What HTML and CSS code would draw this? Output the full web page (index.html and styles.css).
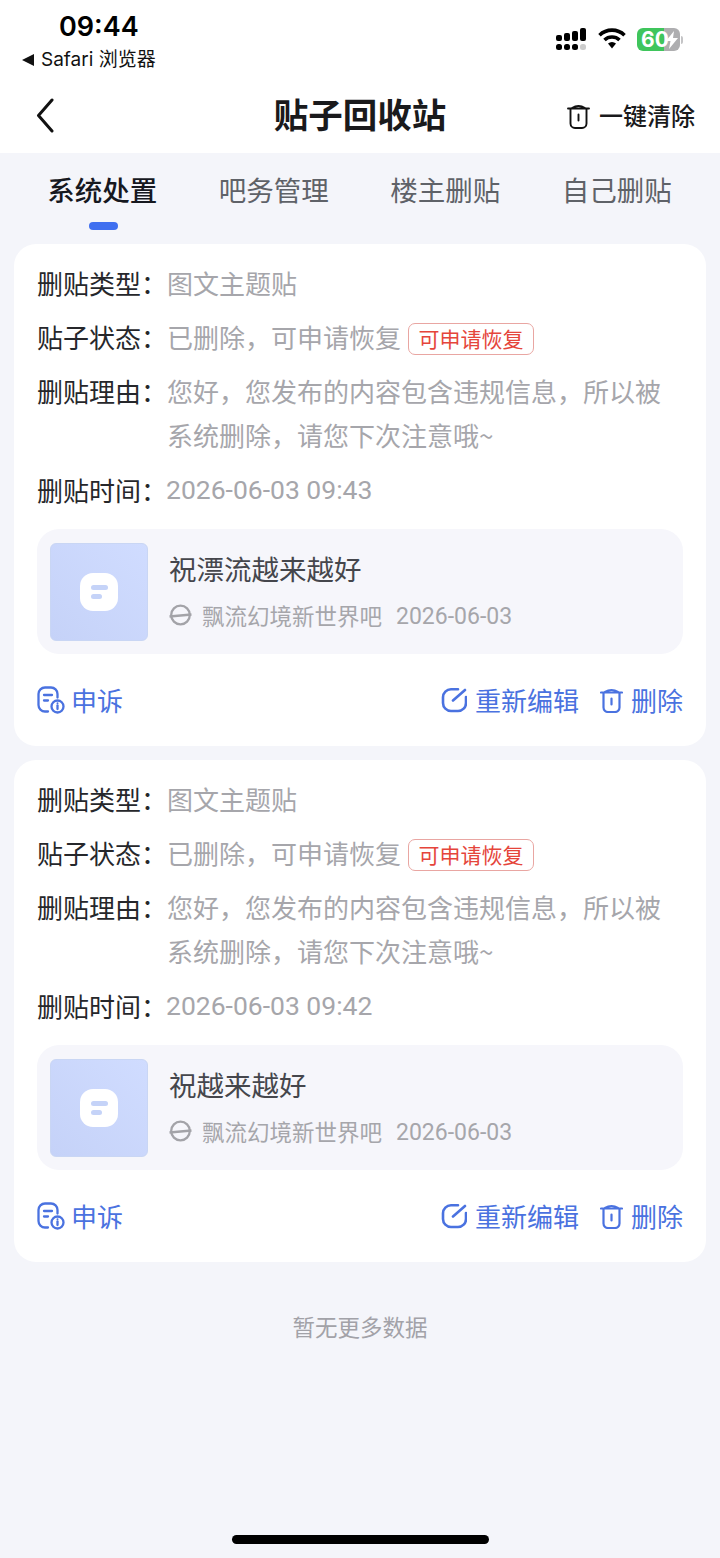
FILE: index.html
```html
<!DOCTYPE html>
<html lang="zh">
<head>
<meta charset="utf-8">
<title>贴子回收站</title>
<link rel="stylesheet" href="styles.css">
</head>
<body>
<div class="page">
  <header class="top">
    <div class="status">
      <div class="status-left">
        <div class="time">09:44</div>
        <div class="back-app"><span class="tri"></span>Safari 浏览器</div>
      </div>
      <div class="status-right">
        <svg class="signal" width="31" height="22" viewBox="0 0 31 22"><g fill="#000"><rect x="0" y="7" width="6" height="6" rx="2"/><rect x="8" y="5" width="6" height="8" rx="2"/><rect x="16" y="3" width="6" height="10" rx="2"/><rect x="24" y="0" width="6" height="13" rx="2"/><rect x="0" y="16" width="6" height="6" rx="2.5"/><rect x="8" y="16" width="6" height="6" rx="2.5"/><rect x="16" y="16" width="6" height="6" rx="2.5"/><rect x="24" y="16" width="6" height="6" rx="2.5" fill="#ccc"/></g></svg>
        <svg class="wifi" width="28" height="21" viewBox="0 0 28 21"><g fill="none" stroke="#000" stroke-width="3.6"><path d="M1.5 7.2a18 18 0 0 1 25 0"/><path d="M6.5 12a11 11 0 0 1 15 0"/></g><path d="M10 15.5a6 6 0 0 1 8 0L14 20.5z" fill="#000"/></svg>
        <div class="battery"><span class="batt-num">60</span><svg class="bolt" width="12" height="18" viewBox="0 0 12 18"><path d="M8 0 0 10h4.500L3 18l9-11H7z" fill="#fff"/></svg></div>
        <span class="batt-cap"></span>
      </div>
    </div>
    <nav class="nav">
      <svg class="back" width="18" height="35" viewBox="0 0 18 35"><path d="M16 2 2.500 17.500 16 33" fill="none" stroke="#111" stroke-width="3" stroke-linecap="round" stroke-linejoin="round"/></svg>
      <h1 class="title">贴子回收站</h1>
      <div class="clear">
        <svg class="trash" width="23" height="25" viewBox="0 0 23 25"><path d="M1 4.500h21M3.500 5v14.500a4.500 4.500 0 0 0 4.500 4.500h7a4.500 4.500 0 0 0 4.500-4.500V5M5 4Q11.500 0 18 4M11.500 10.500v6" fill="none" stroke="#111" stroke-width="1.900" stroke-linecap="round"/></svg>
        <span>一键清除</span>
      </div>
    </nav>
  </header>

  <div class="tabs">
    <div class="tab active">系统处置<span class="ink"></span></div>
    <div class="tab">吧务管理</div>
    <div class="tab">楼主删贴</div>
    <div class="tab">自己删贴</div>
  </div>

  <main class="list">
    <article class="card">
      <div class="row"><span class="key">删贴类型：</span><span class="val">图文主题贴</span></div>
      <div class="row"><span class="key">贴子状态：</span><span class="val">已删除，可申请恢复</span><span class="tag">可申请恢复</span></div>
      <div class="row"><span class="key">删贴理由：</span><span class="val">您好，您发布的内容包含违规信息，所以被系统删除，请您下次注意哦~</span></div>
      <div class="row row-time"><span class="key">删贴时间：</span><span class="val num">2026-06-03 09:43</span></div>
      <div class="post">
        <div class="thumb"><span class="logo"><i class="l1"></i><i class="l2"></i></span></div>
        <div class="post-body">
          <div class="post-title">祝漂流越来越好</div>
          <div class="post-meta">
            <svg class="planet" width="23" height="22" viewBox="0 0 23 22"><g fill="none" stroke="#a3a3a8" stroke-width="2.300"><circle cx="11.500" cy="11" r="9.300"/><path d="M0.500 12.500 22.500 10.500"/></g></svg>
            <span class="forum">飘流幻境新世界吧</span><span class="date">2026-06-03</span>
          </div>
        </div>
      </div>
      <div class="actions">
        <div class="act appeal">
          <svg width="28" height="28" viewBox="0 0 28 28"><g fill="none" stroke="#4a72e0" stroke-width="2.300" stroke-linecap="round"><path d="M11 25.500H8a6.500 6.500 0 0 1-6.500-6.500V8A6.500 6.500 0 0 1 8 1.500h6A6.500 6.500 0 0 1 20.500 8v3.500"/><path d="M7 9h8M7 14.500h4"/><circle cx="20.500" cy="20.500" r="6"/><path d="M20.500 19.500V23"/></g><circle cx="20.500" cy="17.200" r="1" fill="#4a72e0"/></svg>
          <span>申诉</span>
        </div>
        <div class="act-group">
          <div class="act">
            <svg width="28" height="28" viewBox="0 0 28 28"><path d="M19 3.300H12a8 8 0 0 0-8 8V17a8 8 0 0 0 8 8h7a8 8 0 0 0 8-8v-6M14 14.500 26 4" fill="none" stroke="#4a72e0" stroke-width="2.600" stroke-linecap="round"/></svg>
            <span>重新编辑</span>
          </div>
          <div class="act">
            <svg width="23" height="26" viewBox="0 0 23 26"><path d="M1 5.500h21M3.500 6v14.500a4.500 4.500 0 0 0 4.500 4.500h7a4.500 4.500 0 0 0 4.500-4.500V6M5 5Q11.500 1 18 5M11.500 11.500v6" fill="none" stroke="#4a72e0" stroke-width="2.200" stroke-linecap="round"/></svg>
            <span>删除</span>
          </div>
        </div>
      </div>
    </article>

    <article class="card">
      <div class="row"><span class="key">删贴类型：</span><span class="val">图文主题贴</span></div>
      <div class="row"><span class="key">贴子状态：</span><span class="val">已删除，可申请恢复</span><span class="tag">可申请恢复</span></div>
      <div class="row"><span class="key">删贴理由：</span><span class="val">您好，您发布的内容包含违规信息，所以被系统删除，请您下次注意哦~</span></div>
      <div class="row row-time"><span class="key">删贴时间：</span><span class="val num">2026-06-03 09:42</span></div>
      <div class="post">
        <div class="thumb"><span class="logo"><i class="l1"></i><i class="l2"></i></span></div>
        <div class="post-body">
          <div class="post-title">祝越来越好</div>
          <div class="post-meta">
            <svg class="planet" width="23" height="22" viewBox="0 0 23 22"><g fill="none" stroke="#a3a3a8" stroke-width="2.300"><circle cx="11.500" cy="11" r="9.300"/><path d="M0.500 12.500 22.500 10.500"/></g></svg>
            <span class="forum">飘流幻境新世界吧</span><span class="date">2026-06-03</span>
          </div>
        </div>
      </div>
      <div class="actions">
        <div class="act appeal">
          <svg width="28" height="28" viewBox="0 0 28 28"><g fill="none" stroke="#4a72e0" stroke-width="2.300" stroke-linecap="round"><path d="M11 25.500H8a6.500 6.500 0 0 1-6.500-6.500V8A6.500 6.500 0 0 1 8 1.500h6A6.500 6.500 0 0 1 20.500 8v3.500"/><path d="M7 9h8M7 14.500h4"/><circle cx="20.500" cy="20.500" r="6"/><path d="M20.500 19.500V23"/></g><circle cx="20.500" cy="17.200" r="1" fill="#4a72e0"/></svg>
          <span>申诉</span>
        </div>
        <div class="act-group">
          <div class="act">
            <svg width="28" height="28" viewBox="0 0 28 28"><path d="M19 3.300H12a8 8 0 0 0-8 8V17a8 8 0 0 0 8 8h7a8 8 0 0 0 8-8v-6M14 14.500 26 4" fill="none" stroke="#4a72e0" stroke-width="2.600" stroke-linecap="round"/></svg>
            <span>重新编辑</span>
          </div>
          <div class="act">
            <svg width="23" height="26" viewBox="0 0 23 26"><path d="M1 5.500h21M3.500 6v14.500a4.500 4.500 0 0 0 4.500 4.500h7a4.500 4.500 0 0 0 4.500-4.500V6M5 5Q11.500 1 18 5M11.500 11.500v6" fill="none" stroke="#4a72e0" stroke-width="2.200" stroke-linecap="round"/></svg>
            <span>删除</span>
          </div>
        </div>
      </div>
    </article>
  </main>

  <div class="nomore">暂无更多数据</div>
  <div class="home-wrap"><span class="home"></span></div>
</div>
</body>
</html>
```
FILE: styles.css
```css
* { box-sizing: border-box; }
html, body { margin: 0; padding: 0; }
body {
  width: 720px;
  height: 1558px;
  overflow: hidden;
  background: #f4f5fa;
  font-family: "Noto Sans CJK SC", "Noto Sans", sans-serif;
}
.page { display: flex; flex-direction: column; height: 1558px; }

.top { background: #fff; height: 153px; display: flex; flex-direction: column; }
.status { height: 84px; display: flex; justify-content: space-between; padding: 11px 37px 0 22px; }
.status-left { display: flex; flex-direction: column; }
.time { font-family: Inter, sans-serif; font-weight: 600; font-size: 27px; line-height: 32px; color: #000; padding-left: 37px; }
.back-app { display: flex; align-items: center; gap: 7px; font-family: Inter, "Noto Sans CJK SC", sans-serif; font-size: 19px; line-height: 26px; margin-top: 4px; color: #111; }
.tri { width: 0; height: 0; border-style: solid; border-width: 6.500px 12px 6.500px 0; border-color: transparent #111 transparent transparent; }
.status-right { display: flex; align-items: flex-start; padding-top: 17px; }
.signal { margin-right: 11px; }
.wifi { margin-right: 11px; }
.battery { width: 43px; height: 23px; border-radius: 6px; background: linear-gradient(90deg, #3fc55c 0 62%, #aeaeb0 62% 100%); display: flex; align-items: center; position: relative; }
.batt-num { font-family: Inter, sans-serif; font-weight: 700; font-size: 21px; color: #fff; padding-left: 4px; line-height: 23px; }
.bolt { position: absolute; right: 2px; top: 3px; }
.batt-cap { width: 2px; height: 8px; background: #c4c4c6; border-radius: 0 2px 2px 0; margin: 8px 0 0 1px; }

.nav { flex: 1; display: flex; align-items: center; justify-content: space-between; padding: 0 25px 7px 36px; position: relative; }
.back { display: block; margin-top: 1px; }
.title { position: absolute; left: 0; right: 0; top: 6px; margin: 0; text-align: center; font-size: 34.500px; line-height: 46px; font-weight: 700; color: #1a1a1c; }
.clear { display: flex; align-items: center; gap: 10px; font-size: 24px; font-weight: 500; color: #1a1a1c; line-height: 34px; }
.clear span { margin-left: -1px; }
.trash { display: block; margin-top: 2px; }

.tabs { display: grid; grid-template-columns: repeat(4, 171.500px); padding: 0 16.500px; height: 91px; }
.tab { position: relative; text-align: center; font-size: 27.500px; line-height: 40px; padding-top: 16px; color: #5f6268; }
.tab.active { color: #16181f; font-weight: 500; }
.ink { position: absolute; left: 72.500px; top: 69px; width: 29px; height: 8px; border-radius: 4px; background: #3f6ff0; }

.list { display: flex; flex-direction: column; gap: 14px; padding: 0 14px; }
.card { background: #fff; border-radius: 22px; height: 502px; padding: 17px 23px 0; display: flex; flex-direction: column; gap: 10px; }
.row { display: flex; align-items: flex-start; font-size: 26px; line-height: 44px; }
.key { flex: none; width: 130px; color: #26272b; }
.val { flex: 1; color: #a6a6ab; }
.row:nth-child(2) .val { flex: none; }
.row-time { padding-top: 1px; }
.num { font-family: Roboto, Inter, sans-serif; font-size: 26.500px; margin-left: -1px; }
.tag { margin-left: 7px; margin-top: 8px; height: 32px; width: 126px; border: 1px solid #e9a6a2; border-radius: 7px; color: #e5453b; font-size: 21px; line-height: 29px; text-align: center; }

.post { margin-top: 7px; height: 125px; background: #f6f6fb; border-radius: 22px; padding: 14px 13px; display: flex; gap: 21px; }
.thumb { width: 98px; height: 98px; border-radius: 6px; background: linear-gradient(45deg, #c5d2f8, #d0dcff); border: 1px solid #c9d6f4; display: flex; align-items: center; justify-content: center; }
.logo { width: 38px; height: 38px; border-radius: 13px; background: #fff; display: flex; flex-direction: column; align-items: flex-start; justify-content: center; gap: 4px; padding-left: 11px; }
.logo i { display: block; height: 5px; border-radius: 3px; background: #c5d3f8; }
.l1 { width: 17px; }
.l2 { width: 11px; }
.post-body { display: flex; flex-direction: column; padding-top: 5px; }
.post-title { font-size: 27.500px; line-height: 40px; color: #45464c; }
.post-meta { display: flex; align-items: center; margin-top: 7px; font-size: 22.500px; line-height: 34px; color: #a6a6ab; }
.planet { margin-right: 10px; }
.date { margin-left: 14px; margin-top: 5px; font-family: Roboto, Inter, sans-serif; font-size: 23px; }

.actions { display: flex; justify-content: space-between; align-items: center; margin-top: 16px; color: #4a72e0; font-size: 26px; line-height: 40px; }
.act-group { display: flex; gap: 21px; }
.act { display: flex; align-items: center; gap: 8px; }
.act.appeal { gap: 6px; }
.act svg { display: block; }

.nomore { margin-top: 47px; text-align: center; font-size: 22.500px; line-height: 34px; color: #a2a2a8; }
.home-wrap { margin-top: auto; height: 23px; display: flex; justify-content: center; }
.home { width: 257px; height: 9px; border-radius: 5px; background: #000; }
```
